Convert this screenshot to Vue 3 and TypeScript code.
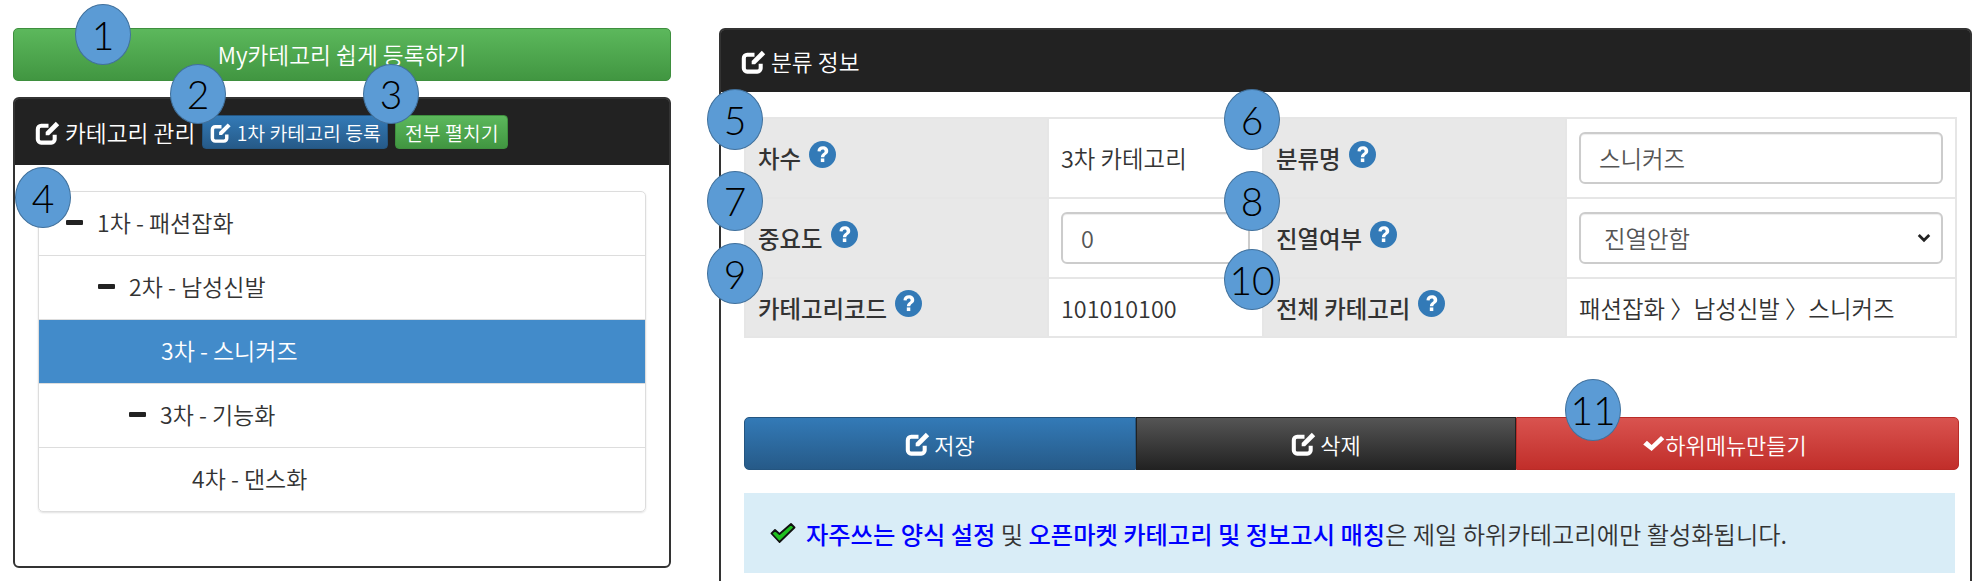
<script setup lang="ts">
interface Row { id: number; indent: number; minus: boolean; text: string; active?: boolean }
const rows: Row[] = [
  { id: 1, indent: 27, minus: true, text: '1차 - 패션잡화' },
  { id: 2, indent: 59, minus: true, text: '2차 - 남성신발' },
  { id: 3, indent: 122, minus: false, text: '3차 - 스니커즈', active: true },
  { id: 4, indent: 90, minus: true, text: '3차 - 기능화' },
  { id: 5, indent: 153, minus: false, text: '4차 - 댄스화' },
]
const bubbles = [
  { n: 1, x: 75, y: 4, h: 61 }, { n: 2, x: 170, y: 64, h: 60 }, { n: 3, x: 363, y: 64, h: 60 },
  { n: 4, x: 15, y: 167, h: 61 }, { n: 5, x: 707, y: 89, h: 61 }, { n: 6, x: 1224, y: 89, h: 61 },
  { n: 7, x: 707, y: 171, h: 60 }, { n: 8, x: 1224, y: 171, h: 60 }, { n: 9, x: 707, y: 243, h: 61 },
  { n: 10, x: 1224, y: 249, h: 61 }, { n: 11, x: 1565, y: 379, h: 62 },
]
const bubbleStyle = (b: { x: number; y: number; h: number }) => ({ left: b.x + 'px', top: b.y + 'px', height: b.h + 'px' })
</script>

<template>
  <div class="page">
    <section class="left">
      <button class="btn green wide">My카테고리 쉽게 등록하기</button>
      <div class="panel left-panel">
        <header class="head left-head">
          <svg class="edit" viewBox="0 0 24 24"><use href="#ic-edit" /></svg>
          <span class="title">카테고리 관리</span>
          <button class="btn blue small"><svg class="edit small-ic" viewBox="0 0 24 24"><use href="#ic-edit" /></svg>1차 카테고리 등록</button>
          <button class="btn green small">전부 펼치기</button>
        </header>
        <div class="tree-wrap">
          <ul class="tree">
            <li v-for="r in rows" :key="r.id" :class="{ active: r.active }">
              <span class="pad" :style="{ width: r.indent + 'px' }"></span>
              <i v-if="r.minus" class="minus"></i>
              <span class="t">{{ r.text }}</span>
            </li>
          </ul>
        </div>
      </div>
    </section>

    <section class="panel right-panel">
      <header class="head right-head">
        <svg class="edit" viewBox="0 0 24 24"><use href="#ic-edit" /></svg>
        <span class="title">분류 정보</span>
      </header>
      <div class="body">
        <div class="info">
          <div class="lab r1">차수 <svg class="q" viewBox="0 0 24 24"><use href="#ic-q" /></svg></div>
          <div class="val r1">3차 카테고리</div>
          <div class="lab r1">분류명 <svg class="q" viewBox="0 0 24 24"><use href="#ic-q" /></svg></div>
          <div class="val r1 ctrl"><input class="field" value="스니커즈" /></div>

          <div class="lab r2">중요도 <svg class="q" viewBox="0 0 24 24"><use href="#ic-q" /></svg></div>
          <div class="val r2 ctrl"><input class="field" value="0" /></div>
          <div class="lab r2">진열여부 <svg class="q" viewBox="0 0 24 24"><use href="#ic-q" /></svg></div>
          <div class="val r2 ctrl">
            <div class="selectbox">진열안함
              <svg class="chev" viewBox="0 0 12 8"><path d="M1.500 1.500 6 6l4.500-4.500" fill="none" stroke="#222" stroke-width="2.400" /></svg>
            </div>
          </div>

          <div class="lab r3">카테고리코드 <svg class="q" viewBox="0 0 24 24"><use href="#ic-q" /></svg></div>
          <div class="val r3">101010100</div>
          <div class="lab r3">전체 카테고리 <svg class="q" viewBox="0 0 24 24"><use href="#ic-q" /></svg></div>
          <div class="val r3">패션잡화 〉남성신발 〉스니커즈</div>
        </div>

        <div class="actions">
          <button class="btn blue act"><svg class="edit" viewBox="0 0 24 24"><use href="#ic-edit" /></svg>저장</button>
          <button class="btn dark act"><svg class="edit" viewBox="0 0 24 24"><use href="#ic-edit" /></svg>삭제</button>
          <button class="btn red act"><svg class="chk" viewBox="0 0 24 16"><path d="M1 9l4-4 5 4.500L20 0l3.500 3.500L10 16z" fill="#fff" /></svg>하위메뉴만들기</button>
        </div>

        <div class="alert">
          <svg class="okay" viewBox="0 0 26 20"><path d="M1.500 10.500 5 7l4.500 4L21 1l3.500 3.500L9.500 19z" fill="#1fc01f" stroke="#111" stroke-width="1.800" stroke-linejoin="round" /></svg>
          <span><b>자주쓰는 양식 설정</b> 및 <b>오픈마켓 카테고리 및 정보고시 매칭</b>은 제일 하위카테고리에만 활성화됩니다.</span>
        </div>
      </div>
    </section>

    <div v-for="b in bubbles" :key="b.n" class="bubble" :style="bubbleStyle(b)">{{ b.n }}</div>

    <svg class="defs" width="0" height="0">
      <defs>
        <symbol id="ic-edit" viewBox="0 0 24 24">
          <path d="M17.500 14v4a3 3 0 0 1-3 3H5.500a3 3 0 0 1-3-3V9a3 3 0 0 1 3-3H12" fill="none" stroke="currentColor" stroke-width="3.600" />
          <path d="M9.500 11.500 18.500 2.500l3 3-9 9H9.500z" fill="currentColor" />
        </symbol>
        <symbol id="ic-q" viewBox="0 0 24 24">
          <circle cx="12" cy="12" r="12" fill="#337ab7" />
          <path d="M7.500 9C7.700 6.300 9.600 4.700 12.300 4.700c2.900 0 4.800 1.700 4.800 4.100 0 3.200-3.500 3.200-3.500 5.700h-3c0-3.800 3.300-3.700 3.300-5.500 0-.9-.7-1.500-1.700-1.500-1.100 0-1.800.7-1.900 1.900z" fill="#fff" />
          <rect x="10.500" y="15.500" width="3.100" height="3.200" fill="#fff" />
        </symbol>
      </defs>
    </svg>
  </div>
</template>

<style>
html, body { margin: 0; background: #fff; overflow: hidden; }
</style>

<style scoped>
.page {
  position: relative;
  width: 1982px;
  height: 581px;
  overflow: hidden;
  display: flex;
  align-items: flex-start;
  gap: 48px;
  padding: 28px 10px 0 13px;
  box-sizing: border-box;
  font-family: "Noto Sans CJK KR", "Noto Sans", sans-serif;
  font-size: 23px;
  font-weight: 350;
  color: #333;
}
.defs { position: absolute; }
.left { width: 658px; flex: none; display: flex; flex-direction: column; gap: 16px; }
.btn {
  border: 1px solid transparent;
  font: inherit;
  color: #fff;
  padding: 0;
  display: inline-flex;
  align-items: center;
  justify-content: center;
}
.green { background: linear-gradient(#5cb85c, #419641); border-color: #3e8f3e; }
.blue { background: linear-gradient(#337ab7, #265a88); border-color: #245580; }
.dark { background: linear-gradient(#555, #222); border-color: #222; }
.red { background: linear-gradient(#d9534f, #c12e2a); border-color: #b92c28; }
.wide { height: 53px; border-radius: 5px; font-size: 22.700px; width: 100%; }
.panel { border: 2px solid #333; border-radius: 6px; box-sizing: border-box; background: #fff; }
.left-panel { height: 471px; }
.head { background: #222; color: #fff; display: flex; align-items: center; border-radius: 3px 3px 0 0; }
.left-head { height: 66px; padding-left: 20px; box-sizing: border-box; }
.right-head { height: 62px; padding-left: 20px; box-sizing: border-box; }
.title { font-size: 22.700px; margin-left: 3px; }
.edit { width: 27px; height: 27px; color: #fff; flex: none; }
.small-ic { width: 23px; height: 23px; margin-right: 4px; }
.small { height: 34px; border-radius: 4px; font-size: 19.400px; box-sizing: border-box; }
.left-head .blue { width: 186px; margin-left: 7px; }
.left-head .green { width: 113px; margin-left: 7px; }
.tree-wrap { padding: 26px 23px 0; }
.tree {
  list-style: none;
  margin: 0;
  padding: 0;
  border: 1px solid #ddd;
  border-radius: 5px;
  box-shadow: 0 1px 2px rgba(0, 0, 0, .12);
  overflow: hidden;
}
.tree li {
  height: 64px;
  box-sizing: border-box;
  display: flex;
  align-items: center;
  border-top: 1px solid #ddd;
  font-size: 23px;
  padding-bottom: 3px;
}
.tree li:first-child { border-top: 0; height: 63px; }
.tree li.active { background: #428bca; color: #fff; }
.pad { flex: none; }
.minus { width: 17px; height: 5px; border-radius: 1px; background: #222; margin-right: 14px; flex: none; }
.right-panel { width: 1253px; flex: none; height: 600px; }
.body { padding: 25px 13px 0 23px; }
.info {
  width: 1213px;
  display: grid;
  grid-template-columns: 301px 215px 303px 390px;
  grid-template-rows: 78px 80px 59px;
  border: 2px solid #e6e6e6;
  box-sizing: border-box;
}
.lab, .val { display: flex; align-items: center; box-sizing: border-box; border-top: 2px solid #e6e6e6; border-left: 2px solid #e6e6e6; font-size: 23.400px; }
.lab:nth-child(4n+1) { border-left: 0; }
.r1 { border-top: 0; }
.lab { background: #e8e8e8; padding: 0 0 0 12px; font-weight: 500; }
.val { padding: 0 12px; background: #fff; }
.q { width: 27px; height: 27px; margin-left: 8px; margin-top: -8px; flex: none; }
.field, .selectbox {
  width: 100%;
  height: 52px;
  box-sizing: border-box;
  border: 2px solid #ccc;
  border-radius: 6px;
  background: #fff;
  font: inherit;
  color: #555;
  padding: 0 18px;
  box-shadow: inset 0 1px 1px rgba(0, 0, 0, .07);
}
.selectbox { display: flex; align-items: center; justify-content: space-between; padding: 0 10px 0 23px; }
.chev { width: 14px; height: 10px; }
.actions { display: flex; margin-top: 79px; width: 1215px; }
.act { height: 53px; box-sizing: border-box; font-size: 22px; flex: none; gap: 2px; }
.act.blue { width: 392px; border-radius: 5px 0 0 5px; }
.act.dark { width: 380px; }
.act.red { width: 443px; border-radius: 0 5px 5px 0; gap: 0; padding-right: 26px; }
.chk { width: 23px; height: 15px; }
.alert {
  margin-top: 23px;
  width: 1211px;
  height: 80px;
  background: #d9edf7;
  display: flex;
  align-items: center;
  padding-left: 26px;
  box-sizing: border-box;
  font-size: 24.250px;
  gap: 10px;
}
.alert b { color: #0000ff; font-weight: 500; }
.okay { width: 26px; height: 20px; flex: none; }
.bubble {
  position: absolute;
  width: 56px;
  box-sizing: border-box;
  border: 1.500px solid #41719c;
  border-radius: 50%;
  background: #5b9bd5;
  color: #000;
  font-family: Lato, sans-serif;
  font-size: 39px;
  display: flex;
  align-items: center;
  justify-content: center;
}
</style>
